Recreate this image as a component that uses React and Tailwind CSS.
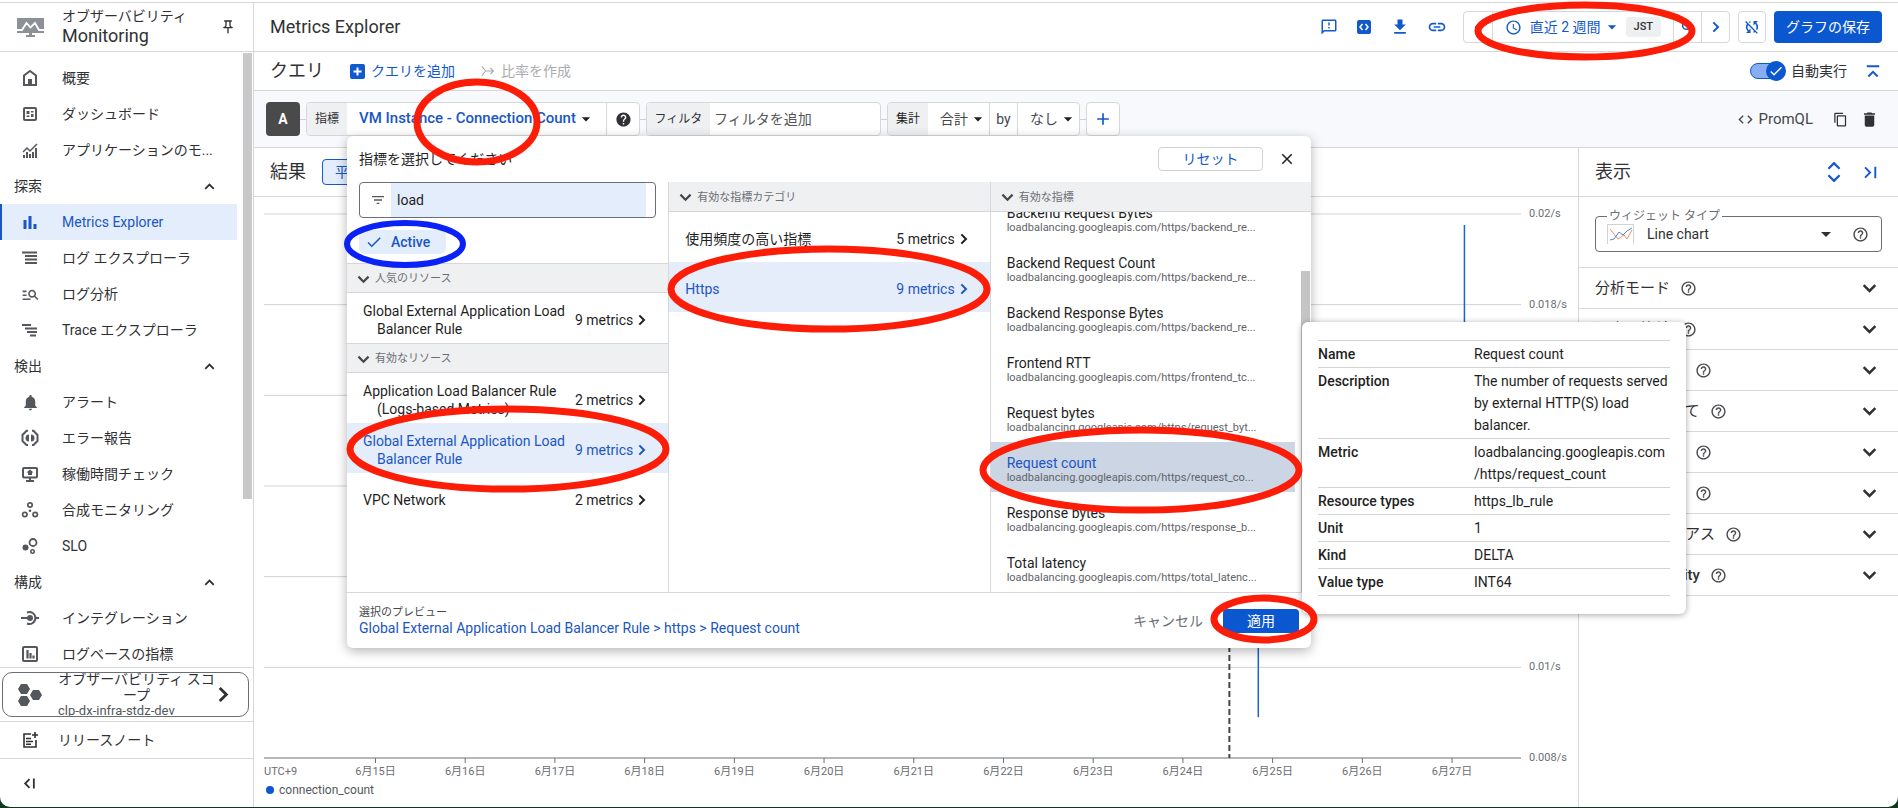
import { useState } from "react";
import {
  MdArrowDropDown,
  MdCheck,
  MdClose,
  MdCode,
  MdContentCopy,
  MdDelete,
  MdDownload,
  MdHelp,
  MdHelpOutline,
  MdLastPage,
  MdLink,
  MdManageSearch,
  MdNotifications,
  MdOutlineFeedback,
  MdOutlinePushPin,
  MdSchedule,
  MdSyncDisabled,
  MdFilterList,
  MdAdd,
} from "react-icons/md";

const Svg = ({ size = 18, children }) => (
  <svg width={size} height={size} viewBox="0 0 18 18" fill="none" stroke="currentColor" strokeWidth="2" className="shrink-0">
    {children}
  </svg>
);

const Chevron = ({ dir = "down", size = 16 }) => (
  <svg width={size} height={size} viewBox="0 0 18 18" fill="none" stroke="currentColor" strokeWidth="3" className="shrink-0">
    {dir === "down" && <path d="M2 5l7 7 7-7" />}
    {dir === "up" && <path d="M2 13l7-7 7 7" />}
    {dir === "right" && <path d="M5 2l7 7-7 7" />}
    {dir === "left" && <path d="M13 2L6 9l7 7" />}
  </svg>
);

const icons = {
  home: (
    <Svg>
      <path d="M3 16V6.500L9 2l6 4.500V16z" />
      <path d="M7 16v-6h4v6z" fill="currentColor" stroke="none" />
    </Svg>
  ),
  dashboard: (
    <Svg>
      <rect x="3" y="3" width="12" height="12" rx="1" />
      <path d="M5.500 6h3v3h-3zM5.500 10.500h3V12h-3zM10 6h2.500v1.500H10zM10 9h2.500v3H10z" fill="currentColor" stroke="none" />
    </Svg>
  ),
  apps: (
    <Svg>
      <path d="M2 11l4-4 3 3 7-7" strokeWidth="1.500" />
      <path d="M3 17v-3M6 17v-6M9 17v-4M12 17v-6M15 17V7" />
    </Svg>
  ),
  metrics: (
    <Svg>
      <path d="M4 16V7M9 16V3M14 16v-5" strokeWidth="3" />
    </Svg>
  ),
  logs: (
    <Svg>
      <path d="M1 3.500h15M4 7h12M4 10.500h12M4 14h12" />
    </Svg>
  ),
  analytics: <MdManageSearch size={19} />,
  trace: (
    <Svg>
      <path d="M1 4h9M4 7.500h6M6 11h10M9 14.500h6M10 7.500h6" />
    </Svg>
  ),
  bell: <MdNotifications size={19} />,
  error: (
    <Svg>
      <path d="M7 1.800H5.500L1.500 6v6l4 4H7M11 1.800h1.500l4 4.200v6l-4 4H11" />
      <path d="M8 5.500a3.500 3.500 0 0 0 0 7zM10 5.500a3.500 3.500 0 0 1 0 7z" fill="currentColor" stroke="none" />
    </Svg>
  ),
  uptime: (
    <Svg>
      <rect x="2" y="3" width="14" height="9.500" rx="1" />
      <path d="M5 16h8" />
      <path d="M9 4.500l3.500 3H11V10H7V7.500H5.500zM8 13h2v3H8z" fill="currentColor" stroke="none" />
    </Svg>
  ),
  synthetic: (
    <Svg>
      <circle cx="9" cy="4" r="2.200" strokeWidth="1.700" />
      <circle cx="3.800" cy="13.500" r="2.200" strokeWidth="1.700" />
      <circle cx="14.200" cy="13.500" r="2.200" strokeWidth="1.700" />
      <circle cx="9" cy="9.800" r="1.300" fill="currentColor" stroke="none" />
    </Svg>
  ),
  slo: (
    <Svg>
      <circle cx="12" cy="5.500" r="3.500" strokeWidth="1.800" />
      <circle cx="4.500" cy="10.500" r="3" fill="currentColor" stroke="none" />
      <circle cx="11.500" cy="14.500" r="1.700" strokeWidth="1.600" />
    </Svg>
  ),
  integration: (
    <Svg>
      <path d="M0 9h8M14 9h4" />
      <circle cx="9" cy="9" r="3" fill="currentColor" stroke="none" />
      <path d="M6 3.500a6 6 0 1 1 0 11" />
    </Svg>
  ),
  logMetrics: (
    <Svg>
      <rect x="2" y="2" width="14" height="14" rx="1" />
      <path d="M6.500 13.500V5M9.500 13.500V8M12.500 13.500v-3" strokeWidth="2.200" />
    </Svg>
  ),
};

const nav = [
  { icon: "home", text: "概要" },
  { icon: "dashboard", text: "ダッシュボード" },
  { icon: "apps", text: "アプリケーションのモ..." },
  { group: "探索" },
  { icon: "metrics", text: "Metrics Explorer", active: true },
  { icon: "logs", text: "ログ エクスプローラ" },
  { icon: "analytics", text: "ログ分析" },
  { icon: "trace", text: "Trace エクスプローラ" },
  { group: "検出" },
  { icon: "bell", text: "アラート" },
  { icon: "error", text: "エラー報告" },
  { icon: "uptime", text: "稼働時間チェック" },
  { icon: "synthetic", text: "合成モニタリング" },
  { icon: "slo", text: "SLO" },
  { group: "構成" },
  { icon: "integration", text: "インテグレーション" },
  { icon: "logMetrics", text: "ログベースの指標" },
];

function Sidebar() {
  return (
    <aside className="flex w-[254px] shrink-0 flex-col border-r border-[#d5d7da]">
      <div className="flex h-[49px] shrink-0 items-center border-b border-[#d5d7da] pr-[17px] pl-[17px]">
        <svg width="27" height="20" viewBox="0 0 27 20" className="shrink-0">
          <path d="M0 1h27v15H0z" fill="#8b9196" />
          <path d="M9 18h9v2H9zM12 16h3v2h-3z" fill="#8b9196" />
          <path d="M0 13h5l4.500-7 4 4.500L18 6l4 7h5" fill="none" stroke="#fff" strokeWidth="1.800" />
        </svg>
        <div className="ml-[18px] flex-1">
          <div className="text-sm leading-[18px] whitespace-nowrap">オブザーバビリティ</div>
          <div className="text-lg leading-[22px]">Monitoring</div>
        </div>
        <button aria-label="固定">
          <MdOutlinePushPin size={16} />
        </button>
      </div>

      <div className="flex min-h-0 flex-1 overflow-hidden">
        <nav className="min-w-0 flex-1 pt-2">
          {nav.map((item) =>
            item.group ? (
              <button key={item.group} className="flex h-9 w-full items-center justify-between pr-[22px] pl-[14px] text-sm">
                {item.group}
                <Chevron dir="up" size={11} />
              </button>
            ) : (
              <a
                key={item.text}
                href="#"
                className={`flex h-9 items-center pl-[21px] text-sm whitespace-nowrap ${
                  item.active ? "bg-[#e3edfc] text-[#1a56c4] shadow-[inset_2px_0_0_#1a56c4]" : "text-[#303134]"
                }`}
              >
                <span className={`flex w-[41px] ${item.active ? "text-[#1a56c4]" : "text-[#54575b]"}`}>{icons[item.icon]}</span>
                {item.text}
              </a>
            ),
          )}
        </nav>
        <div className="w-[16px] shrink-0 pt-px pl-[6px]">
          <div className="h-[446px] w-[9px] bg-[#c8c8c8]" />
        </div>
      </div>

      <div className="shrink-0 border-t border-[#d5d7da] py-1 pr-1 pl-[2px]">
        <button className="flex h-[45px] w-full items-center overflow-hidden rounded-[10px] border border-[#6b6e72] pr-[16px] pl-[15px] text-[#303134]">
          <svg width="24" height="24" viewBox="0 0 24 24" fill="#54575b" className="shrink-0">
            <path d="M3 1h6l3 5-3 5H3L0 6zM3 13h6l3 5-3 5H3l-3-5zM15 7h6l3 5-3 5h-6l-3-5z" />
          </svg>
          <span className="ml-4 flex-1 text-center text-sm leading-4">
            オブザーバビリティ スコープ
            <span className="block text-left text-[13px] text-[#54575b]">clp-dx-infra-stdz-dev</span>
          </span>
          <Chevron dir="right" size={17} />
        </button>
      </div>
      <a href="#" className="flex h-[37px] shrink-0 items-center border-t border-[#d5d7da] pl-[21px] text-sm text-[#303134]">
        <Svg>
          <path d="M10 3H3v13h12V9M5 7.500h5M5 10.500h7M5 13.300h5M14 1v6M11 4h6" strokeWidth="1.600" />
        </Svg>
        <span className="ml-[19px]">リリースノート</span>
      </a>
      <div className="flex h-[49px] shrink-0 items-center border-t border-[#d5d7da] pl-[23px]">
        <button aria-label="メニューを閉じる" className="text-[#303134]">
          <Svg size={13}>
            <path d="M9 3L3 9l6 6M15 2v14" strokeWidth="2.500" />
          </Svg>
        </button>
      </div>
    </aside>
  );
}

function Header() {
  return (
    <header className="flex h-[49px] shrink-0 items-center border-b border-[#d5d7da] pr-4 pl-4">
      <h1 className="flex-1 text-lg">Metrics Explorer</h1>
      <div className="flex items-center gap-[17px] text-[#1259cc]">
        <button aria-label="フィードバック">
          <MdOutlineFeedback size={18} />
        </button>
        <button aria-label="コード">
          <svg width="18" height="18" viewBox="0 0 18 18">
            <rect x="2" y="2" width="14" height="14" rx="2" fill="currentColor" />
            <path d="M7.500 6L5 9l2.500 3M10.500 6L13 9l-2.500 3" fill="none" stroke="#fff" strokeWidth="1.500" />
          </svg>
        </button>
        <button aria-label="ダウンロード">
          <MdDownload size={20} />
        </button>
        <button aria-label="リンク">
          <MdLink size={20} />
        </button>
      </div>
      <div className="ml-4 flex h-8 items-stretch rounded border border-[#d5d7da] text-[#1259cc]">
        <button aria-label="前へ" className="flex w-[28px] items-center justify-center">
          <Chevron dir="left" size={12} />
        </button>
        <button className="flex items-center border-l border-[#d5d7da] pr-3 pl-3 text-sm whitespace-nowrap">
          <MdSchedule size={17} />
          <span className="ml-2">直近 2 週間</span>
          <MdArrowDropDown size={20} className="ml-px" />
          <span className="ml-1 rounded bg-[#eeeff1] px-2 py-[3px] text-[11px] leading-[14px] font-medium text-[#303134]">JST</span>
        </button>
        <button aria-label="ズームをリセット" className="flex w-[28px] items-center justify-center border-l border-[#d5d7da]">
          <Svg size={14}>
            <circle cx="7" cy="7" r="5" />
            <path d="M11 11l5 5" />
          </Svg>
        </button>
        <button aria-label="次へ" className="flex w-[28px] items-center justify-center border-l border-[#d5d7da]">
          <Chevron dir="right" size={12} />
        </button>
      </div>
      <button
        aria-label="自動更新オフ"
        className="ml-2 flex h-8 w-[28px] items-center justify-center rounded border border-[#d5d7da] text-[#1259cc]"
      >
        <MdSyncDisabled size={18} />
      </button>
      <button className="ml-2 h-8 rounded bg-[#0b57d0] px-3 text-sm whitespace-nowrap text-white">グラフの保存</button>
    </header>
  );
}

function QueryBar() {
  const [autoRun, setAutoRun] = useState(true);
  return (
    <div className="flex h-[39px] shrink-0 items-center border-b border-[#d5d7da] pr-[18px] pl-4">
      <h2 className="text-lg">クエリ</h2>
      <button className="ml-[26px] flex items-center gap-[6px] text-sm text-[#1259cc]">
        <svg width="15" height="15" viewBox="0 0 15 15">
          <rect width="15" height="15" rx="2" fill="currentColor" />
          <path d="M7.500 3.500v8M3.500 7.500h8" stroke="#fff" strokeWidth="2" />
        </svg>
        クエリを追加
      </button>
      <button disabled className="ml-[26px] flex items-center gap-[6px] text-sm text-[#a9abae]">
        <Svg size={14}>
          <path d="M1 3l5 6h10M1 15l5-6M12 5l4 4-4 4" strokeWidth="1.500" />
        </Svg>
        比率を作成
      </button>
      <div className="flex-1" />
      <label className="flex items-center text-sm">
        <span className="relative mr-[5px] flex h-5 w-9 items-center">
          <input
            type="checkbox"
            checked={autoRun}
            onChange={(e) => setAutoRun(e.target.checked)}
            className="h-4 w-[34px] appearance-none rounded-full border border-[#0b57d0] bg-[#86aef0]"
          />
          <span className="pointer-events-none absolute top-0 right-0 flex size-5 items-center justify-center rounded-full bg-[#0b57d0] text-white">
            <MdCheck size={16} />
          </span>
        </span>
        自動実行
      </label>
      <button aria-label="折りたたむ" className="ml-[19px] text-[#1259cc]">
        <Svg size={14}>
          <path d="M1 3h16M3 16l6-6 6 6" strokeWidth="2.500" />
        </Svg>
      </button>
    </div>
  );
}

const popularResources = [{ name: "Global External Application Load Balancer Rule", count: 9 }];
const activeResources = [
  { name: "Application Load Balancer Rule (Logs-based Metrics)", count: 2 },
  { name: "Global External Application Load Balancer Rule", count: 9, selected: true },
  { name: "VPC Network", count: 2 },
];
const categories = [
  { name: "使用頻度の高い指標", count: 5 },
  { name: "Https", count: 9, selected: true },
];
const metrics = [
  { name: "Backend Request Bytes", path: "backend_re..." },
  { name: "Backend Request Count", path: "backend_re..." },
  { name: "Backend Response Bytes", path: "backend_re..." },
  { name: "Frontend RTT", path: "frontend_tc..." },
  { name: "Request bytes", path: "request_byt..." },
  { name: "Request count", path: "request_co...", selected: true },
  { name: "Response bytes", path: "response_b..." },
  { name: "Total latency", path: "total_latenc..." },
];
const details = [
  ["Name", "Request count"],
  ["Description", "The number of requests served by external HTTP(S) load balancer."],
  ["Metric", "loadbalancing.googleapis.com /https/request_count"],
  ["Resource types", "https_lb_rule"],
  ["Unit", "1"],
  ["Kind", "DELTA"],
  ["Value type", "INT64"],
];

const SectionHead = ({ children, top }) => (
  <div
    className={`flex h-[30px] shrink-0 items-center gap-[5px] border-b border-[#d5d7da] bg-[#eff0f2] px-[10px] pt-[2px] text-[11px] text-[#6b6e72] ${
      top ? "border-t" : ""
    }`}
  >
    <span className="text-[#45474a]">
      <Chevron size={13} />
    </span>
    {children}
  </div>
);

const ResourceRow = ({ item }) => (
  <button
    className={`flex h-[50px] w-full shrink-0 items-center pt-1 pr-[20px] pl-4 text-left text-sm ${
      item.selected ? "bg-[#e6edfa] text-[#1a56c4]" : ""
    }`}
  >
    <span className="flex-1 pl-[14px] -indent-[14px] leading-[18px]">{item.name}</span>
    <span className="mr-[3px] whitespace-nowrap">{item.count} metrics</span>
    <Chevron dir="right" size={12} />
  </button>
);

function MetricPicker() {
  const [filter, setFilter] = useState("load");
  return (
    <div className="absolute top-[33px] left-0 z-20 flex h-[512px] w-[964px] flex-col rounded-md bg-white text-[#1f1f1f] shadow-[0_3px_12px_rgba(0,0,0,0.3)]">
      <div className="flex h-[46px] shrink-0 items-center pr-[15px] pl-3">
        <span className="flex-1 text-sm">指標を選択してください</span>
        <button className="h-6 w-[105px] rounded border border-[#cfd1d4] text-sm leading-5 text-[#1259cc]">リセット</button>
        <button aria-label="閉じる" className="ml-[15px]">
          <MdClose size={18} />
        </button>
      </div>

      <div className="grid min-h-0 flex-1 grid-cols-3 border-b border-[#d5d7da]">
        <div className="min-w-0">
          <div className="flex h-[81px] flex-col items-start px-3">
            <label className="flex h-9 w-full items-center rounded border border-[#6b6e72] pr-[9px] pl-[10px]">
              <MdFilterList size={16} className="mr-[5px] shrink-0 text-[#54575b]" />
              <input
                aria-label="フィルタ"
                value={filter}
                onChange={(e) => setFilter(e.target.value)}
                className="h-full min-w-0 flex-1 bg-[#e3edfc] px-[6px] text-sm outline-none"
              />
            </label>
            <button className="mt-3 flex h-6 items-center gap-2 rounded-md bg-[#e3edfc] pr-4 pl-[6px] text-sm font-medium text-[#1a56c4]">
              <MdCheck size={18} />
              Active
            </button>
          </div>
          <SectionHead top>人気のリソース</SectionHead>
          {popularResources.map((r) => (
            <ResourceRow key={r.name} item={r} />
          ))}
          <SectionHead top>有効なリソース</SectionHead>
          {activeResources.map((r) => (
            <ResourceRow key={r.name} item={r} />
          ))}
        </div>

        <div className="min-w-0 border-l border-[#d5d7da]">
          <SectionHead>有効な指標カテゴリ</SectionHead>
          {categories.map((r) => (
            <ResourceRow key={r.name} item={r} />
          ))}
        </div>

        <div className="flex min-h-0 min-w-0 flex-col border-l border-[#d5d7da]">
          <SectionHead>有効な指標</SectionHead>
          <div className="flex min-h-0 flex-1">
            <div className="flex flex-1 flex-col justify-end overflow-hidden">
              {metrics.map((m) => (
                <button
                  key={m.name}
                  className={`flex h-[50px] shrink-0 flex-col justify-center pt-[5px] pl-4 text-left ${m.selected ? "bg-[#ccd5e3]" : ""}`}
                >
                  <span className={`text-sm leading-[15px] ${m.selected ? "text-[#1a56c4]" : ""}`}>{m.name}</span>
                  <span className="text-[11px] leading-[13px] text-[#5f6368]">loadbalancing.googleapis.com/https/{m.path}</span>
                </button>
              ))}
            </div>
            <div className="w-4 pt-[59px] pl-[6px]">
              <div className="h-full w-[9px] bg-[#c4c4c4]" />
            </div>
          </div>
        </div>
      </div>

      <div className="flex h-[55px] shrink-0 items-center px-3">
        <div className="flex-1">
          <div className="text-[11px] leading-[14px] text-[#45474a]">選択のプレビュー</div>
          <div className="text-sm leading-4 text-[#1a56c4]">Global External Application Load Balancer Rule &gt; https &gt; Request count</div>
        </div>
        <button className="text-sm text-[#6b6e72]">キャンセル</button>
        <button className="ml-5 h-6 w-[76px] rounded bg-[#0b57d0] text-sm leading-6 text-white">適用</button>
      </div>

      <div className="absolute top-[186px] left-[955px] w-[384px] rounded-md bg-white px-4 py-[18px] shadow-[0_1px_6px_rgba(0,0,0,0.35)]">
        <table className="w-full border-t border-[#d0d2d5] text-sm leading-[22px]">
          <tbody>
            {details.map(([name, value]) => (
              <tr key={name} className="border-b border-[#d0d2d5]">
                <th scope="row" className="w-[156px] py-[2px] text-left align-top font-medium">
                  {name}
                </th>
                <td className="py-[2px] align-top">{value}</td>
              </tr>
            ))}
          </tbody>
        </table>
      </div>
    </div>
  );
}

const Wire = () => <span className="h-px w-[6px] shrink-0 bg-[#cfd1d4]" />;

function QueryRow() {
  return (
    <div className="flex h-[57px] shrink-0 items-center border-b border-[#d5d7da] bg-[#f7f9fc] pr-[19px] pl-3">
      <span className="flex h-[34px] w-[34px] items-center justify-center rounded bg-[#4a4a4a] text-sm font-bold text-white">A</span>
      <Wire />
      <div className="flex h-[34px] items-stretch rounded border border-[#d5d7da] bg-white text-sm">
        <span className="flex w-10 items-center justify-center rounded-l bg-[#eff0f2] text-xs">指標</span>
        <div className="relative flex items-center">
          <button className="flex h-full w-[259px] items-center pl-3 text-[15px] font-medium whitespace-nowrap text-[#1a56c4]">
            VM Instance - Connection Count
            <MdArrowDropDown size={20} className="shrink-0 text-[#1f1f1f]" />
          </button>
          <MetricPicker />
        </div>
        <button aria-label="ヘルプ" className="flex w-[33px] items-center justify-center border-l border-[#d5d7da]">
          <MdHelp size={17} />
        </button>
      </div>
      <Wire />
      <label className="flex h-[34px] w-[235px] items-stretch overflow-hidden rounded border border-[#d5d7da] bg-white">
        <span className="flex w-[63px] shrink-0 items-center justify-center bg-[#eff0f2] text-xs">フィルタ</span>
        <input placeholder="フィルタを追加" className="min-w-0 flex-1 pl-1 text-sm outline-none placeholder:text-[#54575b]" />
      </label>
      <Wire />
      <div className="flex h-[34px] w-[193px] items-stretch overflow-hidden rounded border border-[#d5d7da] bg-white text-sm text-[#45474a]">
        <span className="flex w-10 items-center justify-center bg-[#eff0f2] text-xs text-[#1f1f1f]">集計</span>
        <button className="flex w-[61px] items-center justify-end pr-px whitespace-nowrap">
          合計
          <MdArrowDropDown size={20} className="text-[#1f1f1f]" />
        </button>
        <span className="flex w-[29px] items-center justify-center border-x border-[#d5d7da]">by</span>
        <button className="flex flex-1 items-center justify-end pr-px whitespace-nowrap">
          なし
          <MdArrowDropDown size={20} className="text-[#1f1f1f]" />
        </button>
      </div>
      <Wire />
      <button aria-label="追加" className="flex h-[34px] w-[34px] items-center justify-center rounded border border-[#d5d7da] bg-white text-[#1259cc]">
        <MdAdd size={20} />
      </button>
      <div className="flex-1" />
      <button className="flex items-center gap-1 text-[15px] text-[#45474a]">
        <MdCode size={17} />
        PromQL
      </button>
      <button aria-label="複製" className="ml-[20px] text-[#303134]">
        <MdContentCopy size={15} />
      </button>
      <button aria-label="削除" className="ml-3 text-[#303134]">
        <MdDelete size={19} />
      </button>
    </div>
  );
}

const days = [15, 16, 17, 18, 19, 20, 21, 22, 23, 24, 25, 26, 27];
const yLabels = ["0.02/s", "0.018/s", "0.016/s", "0.014/s", "0.012/s", "0.01/s", "0.008/s"];
const xAt = (i) => `${8.87 + i * 7.137}%`;
const yAt = (i) => `${(i * 100) / 6}%`;

function Chart() {
  return (
    <div className="flex min-h-0 flex-1 flex-col pt-[17px] pr-0 pb-[8px] pl-[10px]">
      <div className="flex min-h-0 flex-1">
        <svg width="100%" height="100%" className="min-w-0 flex-1 overflow-visible">
          {yLabels.map((l, i) => (
            <line key={l} x1="0" x2="100%" y1={yAt(i)} y2={yAt(i)} stroke={i === 6 ? "#6b6e72" : "#d0d2d5"} />
          ))}
          <line x1="76.800%" x2="76.800%" y1="0" y2="100%" stroke="#45474a" strokeWidth="2" strokeDasharray="6 3" />
          <line x1="79.100%" x2="79.100%" y1="50%" y2="92.500%" stroke="#1a63d0" strokeWidth="1.500" />
          <line x1="95.500%" x2="95.500%" y1="2%" y2="60%" stroke="#1a63d0" strokeWidth="1.500" />
        </svg>
        <div className="w-[57px] shrink-0 pl-2 text-[11px] text-[#6b6e72]">
          <div className="-my-2 flex h-[calc(100%+16px)] flex-col justify-between leading-4">
            {yLabels.map((l) => (
              <span key={l}>{l}</span>
            ))}
          </div>
        </div>
      </div>
      <div className="mr-[57px] h-[23px] shrink-0">
        <svg width="100%" height="23" className="overflow-visible" fill="#6b6e72" fontSize="11">
          {days.map((d, i) => (
            <line key={d} x1={xAt(i)} x2={xAt(i)} y1="0" y2="5" stroke="#6b6e72" />
          ))}
          <text x="0" y="17">
            UTC+9
          </text>
          {days.map((d, i) => (
            <text key={d} x={xAt(i)} y="17" textAnchor="middle">
              6月{d}日
            </text>
          ))}
        </svg>
      </div>
      <div className="flex h-[18px] shrink-0 items-center gap-[5px] pl-[2px] text-xs text-[#54575b]">
        <span className="size-2 rounded-full bg-[#0b57d0]" />
        connection_count
      </div>
    </div>
  );
}

const settings = [
  "分析モード",
  "過去と比較",
  "しきい値設定",
  "目盛りについて",
  "Ｙ軸の表示名",
  "系列の最大数",
  "凡例のエイリアス",
  "High cardinality",
];

function DisplayPanel() {
  return (
    <section className="flex w-[320px] shrink-0 flex-col border-l border-[#d5d7da]">
      <div className="flex h-[49px] shrink-0 items-center border-b border-[#d5d7da] pr-4 pl-4">
        <h2 className="flex-1 text-lg">表示</h2>
        <button aria-label="すべて展開" className="text-[#1259cc]">
          <Svg size={20}>
            <path d="M4 6l5-5 5 5M4 12l5 5 5-5" />
          </Svg>
        </button>
        <button aria-label="パネルを閉じる" className="ml-[15px] text-[#1259cc]">
          <MdLastPage size={23} />
        </button>
      </div>
      <div className="h-[71px] shrink-0 border-b border-[#d5d7da] px-4 pt-3">
        <fieldset className="flex h-[43px] items-center rounded border border-[#6b6e72] pr-[12px] pb-[6px] pl-[11px]">
          <legend className="px-[2px] text-[12px] leading-[14px] text-[#6b6e72]">ウィジェット タイプ</legend>
          <svg width="27" height="20" viewBox="0 0 27 20" fill="none" className="shrink-0">
            <path d="M.5 20V.5h26V20" stroke="#d0d2d5" />
            <path d="M3 5l8 10 6-4 3 4 5-9" stroke="#f08f6a" />
            <path d="M3 16l4-1 5-7 4 3 4-4 5-3" stroke="#4f86e0" />
          </svg>
          <select aria-label="ウィジェット タイプ" className="ml-[13px] min-w-0 flex-1 appearance-none text-sm">
            <option>Line chart</option>
          </select>
          <MdArrowDropDown size={24} className="mr-[14px] shrink-0" />
          <MdHelpOutline size={17} className="shrink-0 text-[#45474a]" />
        </fieldset>
      </div>
      {settings.map((name, i) => (
        <button key={name} className="flex h-[41px] shrink-0 items-center border-b border-[#d5d7da] pr-[21px] pl-4 text-[15px] whitespace-nowrap">
          <span className={i === 7 ? "font-medium" : ""}>{name}</span>
          <MdHelpOutline size={17} className="ml-[10px] text-[#45474a]" />
          <span className="flex-1" />
          <Chevron size={15} />
        </button>
      ))}
    </section>
  );
}

// hand-drawn highlights over the steps to follow
function Highlights() {
  return (
    <svg width="100%" height="100%" className="pointer-events-none absolute inset-0 z-50" fill="none" stroke="#fb1d08" strokeWidth="7">
      <ellipse cx="477" cy="122" rx="60" ry="40" />
      <ellipse cx="1585" cy="31" rx="107" ry="26" />
      <ellipse cx="829" cy="289" rx="158" ry="40" />
      <ellipse cx="508" cy="449" rx="158" ry="40" />
      <ellipse cx="1141" cy="470" rx="158" ry="40" />
      <ellipse cx="1264" cy="619" rx="50" ry="21" />
      <ellipse cx="405" cy="244" rx="58" ry="21" stroke="#0a22f5" strokeWidth="6" />
    </svg>
  );
}

export default function App() {
  return (
    <div className="relative h-screen overflow-hidden bg-[#0d3a1e] pb-px font-[Roboto,'Noto_Sans_CJK_JP',sans-serif] text-[#303134]">
      <div className="h-full overflow-hidden rounded-b-[10px] bg-white pt-[2px]">
        <div className="flex h-full border-t border-[#d5d7da]">
          <Sidebar />
          <main className="flex min-w-0 flex-1 flex-col">
            <Header />
            <QueryBar />
            <QueryRow />
            <div className="flex min-h-0 flex-1">
              <section className="flex min-w-0 flex-1 flex-col">
                <div className="flex h-[49px] shrink-0 items-center border-b border-[#d5d7da] pl-4">
                  <h2 className="text-lg">結果</h2>
                  <button className="ml-4 h-[26px] rounded border border-[#1259cc] bg-[#e3edfc] px-3 text-sm leading-6 text-[#1259cc]">平均値</button>
                </div>
                <Chart />
              </section>
              <DisplayPanel />
            </div>
          </main>
        </div>
      </div>
      <Highlights />
    </div>
  );
}
